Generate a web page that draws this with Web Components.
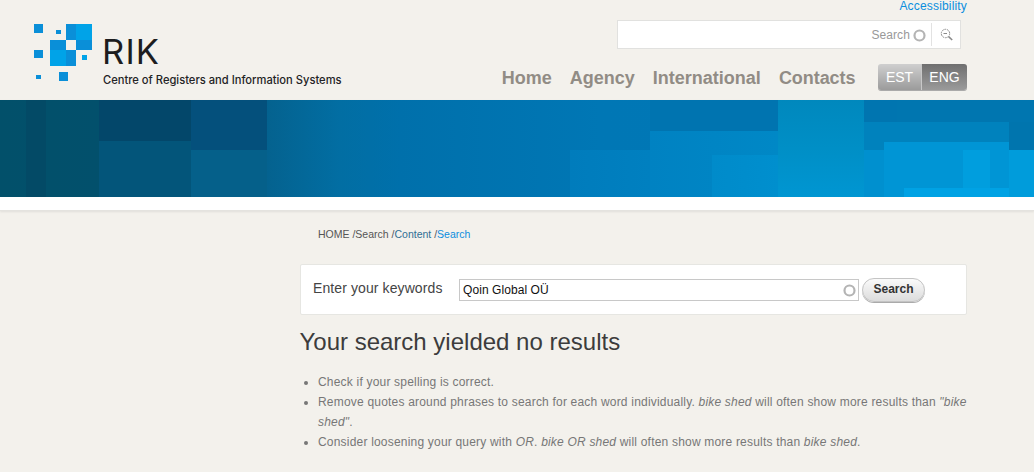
<!DOCTYPE html>
<html lang="en"><head><meta charset="utf-8"><title>RIK</title>
<style>
html,body{margin:0;padding:0;background:#f3f1ec;font-family:"Liberation Sans",Arial,sans-serif;overflow:hidden}
</style></head><body>
<rik-header></rik-header>
<rik-banner></rik-banner>
<rik-main>
  <rik-crumbs></rik-crumbs>
  <rik-searchform></rik-searchform>
  <rik-results></rik-results>
</rik-main>
<script>
function def(name, html){
  customElements.define(name, class extends HTMLElement{
    constructor(){super();const r=this.attachShadow({mode:'open'});r.innerHTML=html;}
  });
}
const ring=`<svg width="13" height="13" viewBox="0 0 13 13" aria-hidden="true"><circle cx="6.5" cy="6.5" r="5" fill="#fff" stroke="#b4b4b4" stroke-width="2.2"/></svg>`;
def('rik-logo',`<style>
:host{display:flex;align-items:flex-start;color:#1d1d1f;font-family:Inter,"Liberation Sans",sans-serif}
svg{display:block;flex:none}
.t{margin-left:11px;padding-top:12px}
.n{font-size:34.5px;line-height:32px;letter-spacing:1.2px;height:33px;font-weight:400;margin-left:-1px}
.s{font-size:11.17px;line-height:14px;font-weight:500;white-space:nowrap;margin-top:4px;color:#232325}
</style>
<svg width="58" height="57" viewBox="0 0 58 57" aria-hidden="true" shape-rendering="crispEdges">
<g fill="#0a8fd8">
<rect x="0" y="0" width="9" height="9"/><rect x="22" y="6" width="5" height="4"/><rect x="32" y="0" width="10" height="16"/>
<rect x="16" y="16" width="16" height="10"/><rect x="42" y="16" width="16" height="10"/><rect x="32" y="26" width="10" height="16"/>
<rect x="0" y="26" width="9" height="8"/><rect x="25" y="48" width="9" height="9"/><rect x="2" y="51" width="5" height="4"/></g>
<g fill="#00a3e8"><rect x="42" y="0" width="16" height="16"/><rect x="16" y="26" width="16" height="16"/><rect x="48" y="31" width="5" height="5"/></g>
</svg>
<div class="t"><div class="n">RIK</div><div class="s">Centre of Registers and Information Systems</div></div>`);
def('rik-topsearch',`<style>
:host{display:flex;align-items:center;justify-content:flex-end;box-sizing:border-box;width:344px;height:29px;background:#fff;border:1px solid #e1e1df;font-size:12px;color:#999;letter-spacing:.1px}
span{margin-right:3px}
svg{display:block}
svg.r{margin-top:1px}
.sep{width:1px;height:23px;background:#e2e2e2;margin-left:5px}
.m{width:28px;display:flex;justify-content:center}
</style><span>Search</span>${ring.replace('<svg','<svg class="r"')}<i class="sep"></i><div class="m"><svg width="13" height="13" viewBox="0 0 13 13" fill="none" stroke="#8a8a8a"><circle cx="5.5" cy="5.5" r="4.2" stroke-dasharray="1.8 .8"/><path d="M3.5 5.5h3.5" stroke-width="1"/><path d="M8.6 8.6l3.6 3.4" stroke-width="1.6"/></svg></div>`);
def('rik-nav',`<style>
:host{display:flex;gap:18px;margin-top:2px;font:bold 18px/22px "Liberation Sans",Arial,sans-serif;color:#918c85}
span:first-child{margin-left:1px;letter-spacing:-.2px}
span:last-child{letter-spacing:-.05px}
</style><span>Home</span><span>Agency</span><span>International</span><span>Contacts</span>`);
def('rik-lang',`<style>
:host{display:flex;width:89px;height:26px;border-radius:3px;overflow:hidden;font-size:14px;line-height:26px;color:#fff;text-align:center;box-shadow:0 1px 0 #aaa}
span{display:block}
.a{width:43px;background:linear-gradient(#cfcfcf,#9b9b9b);border-right:1px solid #c8c8c8}
.b{flex:1;background:linear-gradient(#6f6f6f,#9a9a9a)}
</style><span class="a">EST</span><span class="b">ENG</span>`);
def('rik-header',`<style>
:host{display:flex;justify-content:space-between;box-sizing:border-box;height:100px;padding:0 67px 0 34px}
rik-logo{margin-top:24px}
.r{display:flex;flex-direction:column;align-items:flex-end}
a{font-size:12px;line-height:13px;color:#0b8ede;text-decoration:none;letter-spacing:.17px}
rik-topsearch{margin:7px 6px 0 0}
.row{display:flex;align-items:center;margin-top:15px}
rik-lang{margin-left:22.5px}
</style><rik-logo></rik-logo><div class="r"><a>Accessibility</a><rik-topsearch></rik-topsearch><div class="row"><rik-nav></rik-nav><rik-lang></rik-lang></div></div>`);
function rect(c,x,y,w,h){const g=c.includes('(')?c:`linear-gradient(${c},${c})`;return `${g} ${x}px ${y}px / ${w}px ${h}px no-repeat`;}
const rects=[
 rect('#00a2e4',904,88,105,9),
 rect('#009ede',963,50,27,38),
 rect('#009cdb',1009,50,25,47),
 rect('#0095d5',884,42,125,55),
 rect('#0075b0',864,0,33,22),
 rect('#0075ae',1009,22,25,28),
 rect('linear-gradient(#0088bd,#008fc6 50%,#0096d2)',778,0,86,97),
 rect('#0090cf',864,50,20,47),
 rect('#0082bd',864,22,170,28),
 rect('#0076b0',897,0,137,22),
 rect('linear-gradient(90deg,#008bca,#008fce)',712,55,66,42),
 rect('linear-gradient(90deg,#0082c2,#0088c6)',650,31,128,66),
 rect('#0074b0',650,0,128,31),
 rect('linear-gradient(90deg,#007cbc,#0080c0)',570,50,80,47),
 rect('#05608a',191,50,76,47),
 rect('#04507c',191,0,76,50),
 rect('#03557a',99,41,92,56),
 rect('#03476a',99,0,92,41),
 rect('#034a66',26,0,20,97),
].join(',');
def('rik-banner',`<style>
:host{display:block;height:110px;background:#fff;border-bottom:1px solid #e4e3df;box-shadow:0 1px 2px rgba(0,0,0,.08)}
div{height:97px;background:${rects},linear-gradient(90deg,#02506a 0,#02506c 99px,#04628f 267px,#026ea3 340px,#0070ab 400px,#0077b5 600px,#0078b8 1034px)}
</style><div></div>`);
def('rik-main',`<style>
:host{display:block;box-sizing:border-box;width:667px;margin-left:300px}
</style><slot></slot>`);
def('rik-crumbs',`<style>
:host{display:block;padding:17px 0 0 18px;font-size:10.5px;line-height:13px;color:#555}
b{font-weight:400;color:#0b8ede}
.c{color:#2f6f94}
</style>HOME /Search /<span class="c">Content</span> /<b>Search</b>`);
def('rik-searchform',`<style>
:host{display:flex;align-items:center;box-sizing:border-box;height:51px;margin-top:23px;padding:0 12px;background:#fff;border:1px solid #e6e6e2;border-radius:2px}
label{width:146px;font-size:14px;color:#444;margin-top:-4px;letter-spacing:.1px}
.i{display:flex;align-items:center;justify-content:space-between;box-sizing:border-box;width:400px;height:22px;border:1px solid #c8c8c8;padding:0 2px 0 3px;font-size:12px;color:#111;letter-spacing:.07px}
.i svg{margin-top:2px}
button{margin-left:3px;width:63px;height:24px;padding:0 0 2px;border:1px solid #c4c4c4;border-radius:12px;background:linear-gradient(#fafafa,#dcdcdc);font:bold 12px "Liberation Sans",Arial,sans-serif;color:#333;box-shadow:0 1px 0 #aaa}
</style><label>Enter your keywords</label><div class="i"><span>Qoin Global OÜ</span>${ring}</div><button>Search</button>`);
def('rik-results',`<style>
:host{display:block;font-size:12px;color:#777}
h2{margin:13px 0 0 -.5px;font-size:24px;line-height:28px;font-weight:400;color:#3c3c3c}
ul{margin:16px 0 0;padding:0 0 0 18px;line-height:20px;letter-spacing:.197px}
</style><h2>Your search yielded no results</h2>
<ul><li>Check if your spelling is correct.</li>
<li>Remove quotes around phrases to search for each word individually. <em>bike shed</em> will often show more results than <em>"bike shed"</em>.</li>
<li>Consider loosening your query with <em>OR</em>. <em>bike OR shed</em> will often show more results than <em>bike shed</em>.</li></ul>`);
</script>
</body></html>
